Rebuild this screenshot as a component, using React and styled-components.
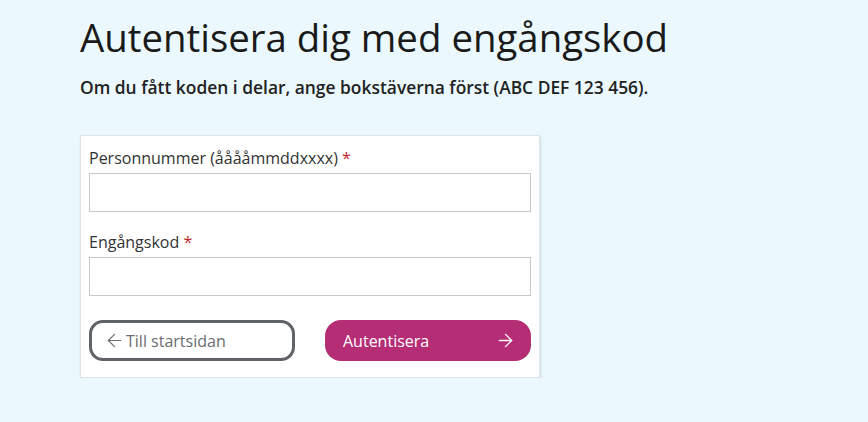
import React from "react";
import styled, { createGlobalStyle } from "styled-components";
import { ArrowLeft, ArrowRight } from "lucide-react";

const GlobalStyle = createGlobalStyle`
  html, body {
    margin: 0;
    padding: 0;
    background: #ebf9fe;
  }
  body {
    font-family: "Open Sans", "Noto Sans", sans-serif;
    color: #1d1d1d;
  }
  * { box-sizing: border-box; }
`;

const App = () => {
  return (
    <>
      <GlobalStyle />
      <Page>
        <Heading>Autentisera dig med engångskod</Heading>
        <Lead>Om du fått koden i delar, ange bokstäverna först (ABC DEF 123 456).</Lead>

        <Card>
          <Field>
            <Label htmlFor="pnr">
              Personnummer (ååååmmddxxxx) <Req>*</Req>
            </Label>
            <Input id="pnr" type="text" />
          </Field>

          <Field>
            <Label htmlFor="code">
              Engångskod <Req>*</Req>
            </Label>
            <Input id="code" type="text" />
          </Field>

          <Actions>
            <BackButton type="button">
              <ArrowLeft size={21} strokeWidth={1.3} />
              Till startsidan
            </BackButton>
            <SubmitButton type="button">
              Autentisera
              <ArrowRight size={21} strokeWidth={1.6} />
            </SubmitButton>
          </Actions>
        </Card>
      </Page>
    </>
  );
};

export default App;

// Styled Components
const Page = styled.div`
  padding: 12px 0 0 80px;
`;

const Heading = styled.h1`
  margin: 0;
  font-size: 38.4px;
  font-weight: 400;
  line-height: 50px;
  color: #1a1a1a;
`;

const Lead = styled.p`
  margin: 13px 0 0;
  font-size: 17.4px;
  font-weight: 600;
  line-height: 24px;
  color: #222;
`;

const Card = styled.div`
  margin-top: 36px;
  width: 460px;
  background: #fff;
  border: 1px solid #dde3e6;
  box-shadow: 1px 2px 3px rgba(0, 0, 0, 0.12);
  padding: 10px 8px 16px;
`;

const Field = styled.div`
  display: flex;
  flex-direction: column;
  margin-bottom: 18px;
`;

const Label = styled.label`
  font-size: 16px;
  line-height: 24px;
  color: #333;
  margin-bottom: 3px;
`;

const Req = styled.span`
  color: #c0282d;
`;

const Input = styled.input`
  height: 39px;
  width: 100%;
  border: 1px solid #c8c8c8;
  background: #fff;
  font: inherit;
  padding: 0 8px;
  outline: none;
`;

const Actions = styled.div`
  display: grid;
  grid-template-columns: 1fr 1fr;
  gap: 30px;
  margin-top: 24px;
`;

const BaseButton = styled.button`
  height: 41px;
  display: flex;
  align-items: center;
  font-family: "Open Sans", "Noto Sans", sans-serif;
  font-size: 16px;
  cursor: pointer;
`;

const BackButton = styled(BaseButton)`
  background: #fff;
  border: 3px solid #5f6266;
  border-radius: 14px;
  color: #6a6d71;
  padding: 0 12px;
  gap: 1px;
`;

const SubmitButton = styled(BaseButton)`
  background: #b52d74;
  border: none;
  border-radius: 16px;
  color: #fff;
  padding: 0 15px 0 18px;
  justify-content: space-between;
`;
